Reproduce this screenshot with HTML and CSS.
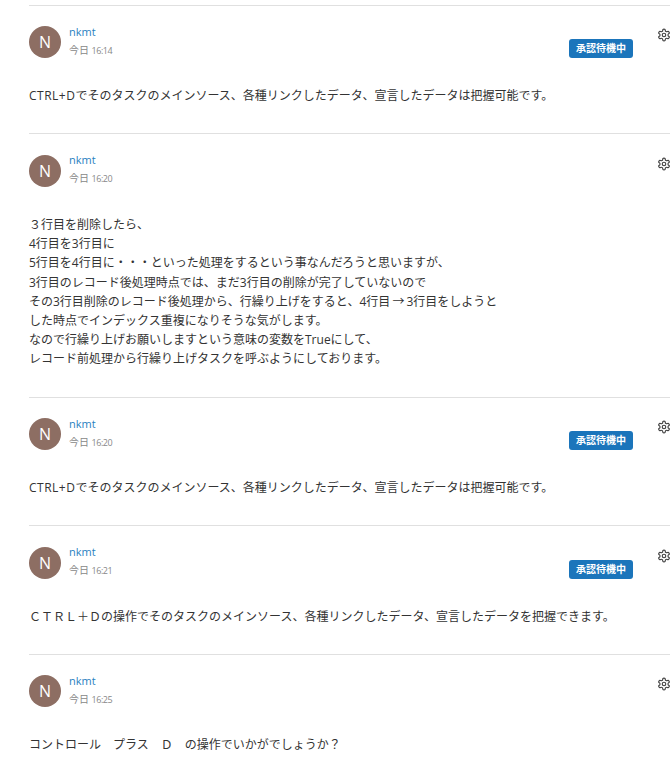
FILE: index.html
```html
<!DOCTYPE html>
<html lang="ja">
<head>
    <meta charset="UTF-8">
    <title>コメント</title>
    <link rel="stylesheet" href="styles.css">
</head>
<body>
    <svg class="sprite" width="0" height="0">
        <symbol id="gear" viewBox="0 0 24 24">
            <path d="M12.22 2h-.44a2 2 0 0 0-2 2v.18a2 2 0 0 1-1 1.73l-.43.25a2 2 0 0 1-2 0l-.15-.08a2 2 0 0 0-2.73.73l-.22.38a2 2 0 0 0 .73 2.73l.15.1a2 2 0 0 1 1 1.72v.51a2 2 0 0 1-1 1.74l-.15.09a2 2 0 0 0-.73 2.73l.22.38a2 2 0 0 0 2.73.73l.15-.08a2 2 0 0 1 2 0l.43.25a2 2 0 0 1 1 1.73V20a2 2 0 0 0 2 2h.44a2 2 0 0 0 2-2v-.18a2 2 0 0 1 1-1.73l.43-.25a2 2 0 0 1 2 0l.15.08a2 2 0 0 0 2.73-.73l.22-.39a2 2 0 0 0-.73-2.73l-.15-.08a2 2 0 0 1-1-1.74v-.5a2 2 0 0 1 1-1.74l.15-.09a2 2 0 0 0 .73-2.73l-.22-.38a2 2 0 0 0-2.73-.73l-.15.08a2 2 0 0 1-2 0l-.43-.25a2 2 0 0 1-1-1.73V4a2 2 0 0 0-2-2z"/>
            <circle cx="12" cy="12" r="3"/>
        </symbol>
    </svg>

    <div class="comments">
        <div class="comment">
            <div class="comment-head">
                <div class="avatar">N</div>
                <div class="meta">
                    <a class="author" href="#">nkmt</a>
                    <div class="time">今日 <span class="clock">16:14</span></div>
                </div>
                <span class="badge">承認待機中</span>
                <svg class="gear"><use href="#gear"/></svg>
            </div>
            <div class="comment-body">
                <p><span class="keys">CTRL+D</span>でそのタスクのメインソース、各種リンクしたデータ、宣言したデータは把握可能です。</p>
            </div>
        </div>

        <div class="comment comment-long">
            <div class="comment-head">
                <div class="avatar">N</div>
                <div class="meta">
                    <a class="author" href="#">nkmt</a>
                    <div class="time">今日 <span class="clock">16:20</span></div>
                </div>
                <svg class="gear"><use href="#gear"/></svg>
            </div>
            <div class="comment-body">
                <p>３行目を削除したら、</p>
                <p>4行目を3行目に</p>
                <p>5行目を4行目に・・・といった処理をするという事なんだろうと思いますが、</p>
                <p>3行目のレコード後処理時点では、まだ3行目の削除が完了していないので</p>
                <p>その3行目削除のレコード後処理から、行繰り上げをすると、4行目 <span class="arrow">→</span> 3行目をしようと</p>
                <p>した時点でインデックス重複になりそうな気がします。</p>
                <p>なので行繰り上げお願いしますという意味の変数をTrueにして、</p>
                <p>レコード前処理から行繰り上げタスクを呼ぶようにしております。</p>
            </div>
        </div>

        <div class="comment">
            <div class="comment-head">
                <div class="avatar">N</div>
                <div class="meta">
                    <a class="author" href="#">nkmt</a>
                    <div class="time">今日 <span class="clock">16:20</span></div>
                </div>
                <span class="badge">承認待機中</span>
                <svg class="gear"><use href="#gear"/></svg>
            </div>
            <div class="comment-body">
                <p><span class="keys">CTRL+D</span>でそのタスクのメインソース、各種リンクしたデータ、宣言したデータは把握可能です。</p>
            </div>
        </div>

        <div class="comment">
            <div class="comment-head">
                <div class="avatar">N</div>
                <div class="meta">
                    <a class="author" href="#">nkmt</a>
                    <div class="time">今日 <span class="clock">16:21</span></div>
                </div>
                <span class="badge">承認待機中</span>
                <svg class="gear"><use href="#gear"/></svg>
            </div>
            <div class="comment-body">
                <p>ＣＴＲＬ＋Ｄの操作でそのタスクのメインソース、各種リンクしたデータ、宣言したデータを把握できます。</p>
            </div>
        </div>

        <div class="comment">
            <div class="comment-head">
                <div class="avatar">N</div>
                <div class="meta">
                    <a class="author" href="#">nkmt</a>
                    <div class="time">今日 <span class="clock">16:25</span></div>
                </div>
                <svg class="gear"><use href="#gear"/></svg>
            </div>
            <div class="comment-body">
                <p>コントロール　プラス　Ｄ　の操作でいかがでしょうか？</p>
            </div>
        </div>
    </div>
</body>
</html>
```

FILE: styles.css
```css
body {
    font-family: "Open Sans", "Noto Sans CJK JP", sans-serif;
    font-size: 12px;
    color: #333;
    background-color: #fff;
    margin: 0;
    height: 779px;
    overflow: hidden;
}

.sprite {
    display: block;
}

.comments {
    margin-left: 29px;
    padding-top: 4.7px;
}

.comment {
    border-top: 1px solid #e0e0e0;
    padding-top: 20.55px;
    height: 107.15px;
}

.comment-long {
    height: 241.65px;
}

.comment-head {
    display: flex;
    align-items: flex-start;
    height: 32px;
}

.avatar {
    width: 32px;
    height: 32px;
    border-radius: 50%;
    background-color: #8d6e63;
    color: #fff;
    font-size: 16px;
    line-height: 32px;
    text-align: center;
    margin-right: 8px;
}

.meta {
    flex: 1;
}

.author {
    display: block;
    color: #2a7fbf;
    font-size: 11px;
    line-height: 14px;
    margin-top: -1.5px;
    text-decoration: none;
}

.time {
    color: #888;
    font-size: 10px;
    line-height: 14px;
    margin-top: 4px;
}

.clock {
    font-size: 9px;
    letter-spacing: -0.5px;
}

.badge {
    background-color: #1b75bb;
    color: #fff;
    font-size: 10px;
    font-weight: bold;
    line-height: 19px;
    width: 64px;
    text-align: center;
    border-radius: 3px;
    margin-top: 13px;
    margin-right: 24px;
}

.gear {
    width: 14px;
    height: 14px;
    margin-top: 2px;
    margin-right: -1px;
    flex-shrink: 0;
    fill: none;
    stroke: #444;
    stroke-width: 2;
}

.comment-body {
    margin-top: 28px;
    line-height: 19.2px;
}

.comment-body p {
    margin: 0;
}

.keys {
    letter-spacing: 0.5px;
}

.arrow {
    margin: 0 -1px;
}
```
